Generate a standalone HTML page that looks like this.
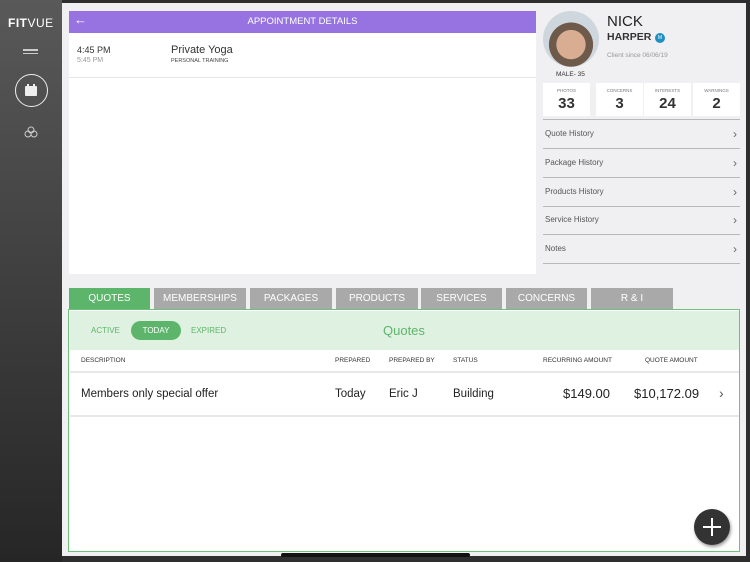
<!DOCTYPE html>
<html><head><style>
*{margin:0;padding:0;box-sizing:border-box}
body{width:750px;height:562px;background:#2e2e2e;font-family:"Liberation Sans",sans-serif;position:relative;overflow:hidden}
.abs{position:absolute}
#side{left:0;top:0;width:62px;height:562px;background:linear-gradient(#595959,#3a3a3a 60%,#262626)}
#main{left:62px;top:3px;width:684px;height:553px;background:#f0f0f2}
.tab{position:absolute;top:288px;height:22px;background:#a9a9a9;color:#fff;font-size:10px;text-align:center;line-height:22px}
.row{position:absolute;left:543px;width:197px;height:29px;border-bottom:1.5px solid #b8b8b8;font-size:8px;color:#555;padding-left:2px;line-height:28px}
.row span{position:absolute;right:3px;top:0;font-size:12px;color:#666}
.stat{position:absolute;top:83px;width:47px;height:33px;background:#fff;text-align:center}
.stat b{display:block;font-size:4.5px;color:#777;font-weight:normal;margin-top:5px}
.stat i{display:block;font-style:normal;font-weight:bold;font-size:15px;color:#333;margin-top:2px}
.h{position:absolute;top:357px;font-size:6.5px;color:#333}
.d{position:absolute;top:388px;font-size:11.5px;color:#222}
</style></head><body>
<div id="side" class="abs"></div>
<div class="abs" style="left:8px;top:16px;color:#fff;font-size:12px;letter-spacing:0.5px"><b>FIT</b>VUE</div>
<div class="abs" style="left:23px;top:49px;width:15px;height:1.5px;background:#ccc"></div>
<div class="abs" style="left:23px;top:52.5px;width:15px;height:1.5px;background:#ccc"></div>
<div class="abs" style="left:15px;top:74px;width:33px;height:33px;border:1.5px solid #eee;border-radius:50%"></div>
<div class="abs" style="left:25px;top:86px;width:12px;height:10px;background:#eee;border-radius:1px"></div>
<div class="abs" style="left:27px;top:84px;width:2px;height:3px;background:#eee"></div>
<div class="abs" style="left:33px;top:84px;width:2px;height:3px;background:#eee"></div>
<svg class="abs" style="left:24px;top:126px" width="14" height="12" viewBox="0 0 14 12"><g fill="none" stroke="#ccc" stroke-width="1"><circle cx="7" cy="4" r="3"/><circle cx="4" cy="8" r="3"/><circle cx="10" cy="8" r="3"/></g></svg>
<div id="main" class="abs"></div>
<div class="abs" style="left:69px;top:11px;width:467px;height:22px;background:#9673e0;color:#fff;font-size:9.5px;text-align:center;line-height:22px">APPOINTMENT DETAILS</div>
<div class="abs" style="left:74px;top:12px;color:#fff;font-size:13px">&#8592;</div>
<div class="abs" style="left:69px;top:33px;width:467px;height:241px;background:#fff"></div>
<div class="abs" style="left:69px;top:77px;width:467px;height:1px;background:#e6e6e6"></div>
<div class="abs" style="left:77px;top:45px;font-size:9px;color:#333">4:45 PM</div>
<div class="abs" style="left:77px;top:57px;font-size:7px;color:#999">5:45 PM</div>
<div class="abs" style="left:171px;top:44px;font-size:11px;color:#333">Private Yoga</div>
<div class="abs" style="left:171px;top:58px;font-size:5.5px;color:#444">PERSONAL TRAINING</div>
<div class="abs" style="left:543px;top:11px;width:56px;height:56px;border-radius:50%;background:radial-gradient(circle at 50% 60%,#d8ad92 0 33%,#6e5a4a 34% 50%,#cfd7de 51%)"></div>
<div class="abs" style="left:607px;top:13px;font-size:15px;color:#222">NICK</div>
<div class="abs" style="left:607px;top:31px;font-size:10.5px;color:#333;font-weight:bold">HARPER</div>
<div class="abs" style="left:655px;top:33px;width:10px;height:10px;border-radius:50%;background:#1d8fc0;color:#fff;font-size:5px;text-align:center;line-height:10px">M</div>
<div class="abs" style="left:607px;top:52px;font-size:6.5px;color:#999">Client since 06/06/19</div>
<div class="abs" style="left:556px;top:71px;font-size:6.5px;color:#333">MALE- 35</div>
<div class="stat" style="left:543px"><b>PHOTOS</b><i>33</i></div>
<div class="stat" style="left:596px"><b>CONCERNS</b><i>3</i></div>
<div class="stat" style="left:644px"><b>INTERESTS</b><i>24</i></div>
<div class="stat" style="left:693px"><b>WARNINGS</b><i>2</i></div>
<div class="abs" style="left:543px;top:119px;width:197px;height:1px;background:#b8b8b8"></div>
<div class="row" style="top:120px">Quote History<span>&#8250;</span></div>
<div class="row" style="top:149px">Package History<span>&#8250;</span></div>
<div class="row" style="top:178px">Products History<span>&#8250;</span></div>
<div class="row" style="top:206px">Service History<span>&#8250;</span></div>
<div class="row" style="top:235px">Notes<span>&#8250;</span></div>
<div class="tab" style="left:69px;width:81px;background:#5cb56a">QUOTES</div>
<div class="tab" style="left:154px;width:92px">MEMBERSHIPS</div>
<div class="tab" style="left:250px;width:82px">PACKAGES</div>
<div class="tab" style="left:336px;width:82px">PRODUCTS</div>
<div class="tab" style="left:421px;width:81px">SERVICES</div>
<div class="tab" style="left:506px;width:81px">CONCERNS</div>
<div class="tab" style="left:591px;width:82px">R &amp; I</div>
<div class="abs" style="left:68px;top:309px;width:672px;height:243px;border:1.5px solid #6cc27a;background:#fff"></div>
<div class="abs" style="left:69.5px;top:310.5px;width:669px;height:39px;background:#dff1e0"></div>
<div class="abs" style="left:91px;top:326px;font-size:8px;color:#5cb56a">ACTIVE</div>
<div class="abs" style="left:131px;top:321px;width:50px;height:19px;border-radius:10px;background:#5cb56a;color:#fff;font-size:8px;text-align:center;line-height:19px">TODAY</div>
<div class="abs" style="left:191px;top:326px;font-size:8px;color:#5cb56a">EXPIRED</div>
<div class="abs" style="left:383px;top:323px;font-size:13px;color:#5cb56a">Quotes</div>
<div class="h" style="left:81px">DESCRIPTION</div>
<div class="h" style="left:335px">PREPARED</div>
<div class="h" style="left:389px">PREPARED BY</div>
<div class="h" style="left:453px">STATUS</div>
<div class="h" style="left:543px">RECURRING AMOUNT</div>
<div class="h" style="left:645px">QUOTE AMOUNT</div>
<div class="abs" style="left:69.5px;top:371px;width:669px;height:1.5px;background:#e8e8e8"></div>
<div class="d" style="left:81px">Members only special offer</div>
<div class="d" style="left:335px">Today</div>
<div class="d" style="left:389px">Eric J</div>
<div class="d" style="left:453px">Building</div>
<div class="d" style="left:563px;font-size:13px;top:386px">$149.00</div>
<div class="d" style="left:634px;font-size:13px;top:386px">$10,172.09</div>
<div class="d" style="left:719px;color:#555;font-size:14px;top:385px">&#8250;</div>
<div class="abs" style="left:69.5px;top:415px;width:669px;height:1.5px;background:#e8e8e8"></div>
<div class="abs" style="left:694px;top:509px;width:36px;height:36px;border-radius:50%;background:#333;box-shadow:1px 2px 3px rgba(0,0,0,.4)"></div>
<div class="abs" style="left:703px;top:526px;width:18px;height:2px;background:#fff"></div>
<div class="abs" style="left:711px;top:518px;width:2px;height:18px;background:#fff"></div>
<div class="abs" style="left:281px;top:553px;width:189px;height:4px;border-radius:2px;background:#111"></div>
</body></html>
